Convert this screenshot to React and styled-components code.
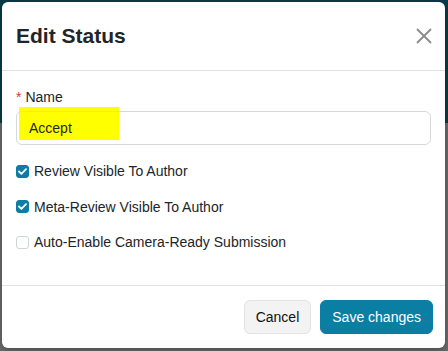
import React, { useState } from "react";
import styled, { createGlobalStyle } from "styled-components";

const GlobalStyle = createGlobalStyle`
  html, body {
    margin: 0;
    padding: 0;
    font-family: "Liberation Sans", Arial, sans-serif;
  }
`;

const Page = styled.div`
  position: relative;
  width: 448px;
  height: 351px;
  overflow: hidden;
  background: #6a6a6a;
`;

const Navbar = styled.div`
  height: 123px;
  background: #0b3a48;
`;

const Modal = styled.div`
  position: absolute;
  left: 2px;
  top: 2px;
  width: 443px;
  height: 346px;
  background: #fff;
  border-radius: 6px;
  display: flex;
  flex-direction: column;
  box-shadow: 0 2px 6px rgba(0, 0, 0, 0.3);
`;

const Header = styled.div`
  display: flex;
  align-items: center;
  justify-content: space-between;
  height: 68px;
  padding: 0 12px 0 14px;
  border-bottom: 1px solid #dee2e6;
`;

const Title = styled.h2`
  margin: 0;
  font-size: 21px;
  font-weight: 700;
  color: #212529;
`;

const CloseButton = styled.button`
  border: none;
  background: none;
  padding: 0;
  width: 18px;
  height: 18px;
  cursor: pointer;
  display: flex;
`;

const Body = styled.div`
  flex: 1;
  padding: 18px 14px 0 14px;
  display: flex;
  flex-direction: column;
`;

const Label = styled.label`
  font-size: 14px;
  color: #212529;
  margin-bottom: 6px;
`;

const Required = styled.span`
  color: #dc3545;
  margin-right: 4px;
`;

const InputWrap = styled.div`
  position: relative;
  height: 34px;
  margin-bottom: 16px;
`;

const TextInput = styled.input`
  width: 100%;
  height: 100%;
  box-sizing: border-box;
  border: 1px solid #d6d8db;
  border-radius: 6px;
  padding: 0 12px;
  font-family: inherit;
  font-size: 14px;
  color: #212529;
  background: transparent;
  position: relative;
  outline: none;
`;

const Highlight = styled.div`
  position: absolute;
  left: 3px;
  top: -4px;
  width: 100px;
  height: 33px;
  background: #ffff00;
`;

const CheckRow = styled.label`
  display: flex;
  align-items: center;
  gap: 5px;
  font-size: 14px;
  color: #212529;
  height: 20px;
  margin-bottom: 15.5px;
`;

const Box = styled.span`
  width: 13px;
  height: 13px;
  box-sizing: border-box;
  border-radius: 3px;
  display: flex;
  align-items: center;
  justify-content: center;
  background: ${(p) => (p.checked ? "#0e7da3" : "#fff")};
  border: 1px solid ${(p) => (p.checked ? "#0e7da3" : "#d0d4d8")};
`;

const Footer = styled.div`
  display: flex;
  justify-content: flex-end;
  align-items: center;
  gap: 9px;
  height: 62px;
  padding: 0 12px 0 0;
  border-top: 1px solid #dee2e6;
`;

const Button = styled.button`
  height: 34px;
  padding: 0 11px;
  border-radius: 6px;
  font-family: inherit;
  font-size: 14px;
  cursor: pointer;
  border: 1px solid ${(p) => (p.primary ? "#0b7ea3" : "#e2e3e5")};
  background: ${(p) => (p.primary ? "#0b7ea3" : "#f3f3f3")};
  color: ${(p) => (p.primary ? "#fff" : "#111")};
`;

function Checkbox({ checked, label, onToggle }) {
  return (
    <CheckRow onClick={onToggle}>
      <Box checked={checked}>
        {checked && (
          <svg width="9" height="7" viewBox="0 0 9 7">
            <path d="M1 3.5 L3.4 5.8 L8 1.2" fill="none" stroke="#fff" strokeWidth="1.8" strokeLinecap="round" strokeLinejoin="round" />
          </svg>
        )}
      </Box>
      {label}
    </CheckRow>
  );
}

export default function App() {
  const [flags, setFlags] = useState({ review: true, meta: true, camera: false });
  const toggle = (k) => setFlags({ ...flags, [k]: !flags[k] });

  return (
    <>
      <GlobalStyle />
      <Page>
        <Navbar />
        <Modal>
          <Header>
            <Title>Edit Status</Title>
            <CloseButton aria-label="Close">
              <svg width="18" height="18" viewBox="0 0 18 18">
                <path d="M2 2 L16 16 M16 2 L2 16" stroke="#8a8a8a" strokeWidth="1.8" />
              </svg>
            </CloseButton>
          </Header>
          <Body>
            <Label>
              <Required>*</Required>Name
            </Label>
            <InputWrap>
              <Highlight />
              <TextInput defaultValue="Accept" />
            </InputWrap>
            <Checkbox checked={flags.review} label="Review Visible To Author" onToggle={() => toggle("review")} />
            <Checkbox checked={flags.meta} label="Meta-Review Visible To Author" onToggle={() => toggle("meta")} />
            <Checkbox checked={flags.camera} label="Auto-Enable Camera-Ready Submission" onToggle={() => toggle("camera")} />
          </Body>
          <Footer>
            <Button>Cancel</Button>
            <Button primary>Save changes</Button>
          </Footer>
        </Modal>
      </Page>
    </>
  );
}
